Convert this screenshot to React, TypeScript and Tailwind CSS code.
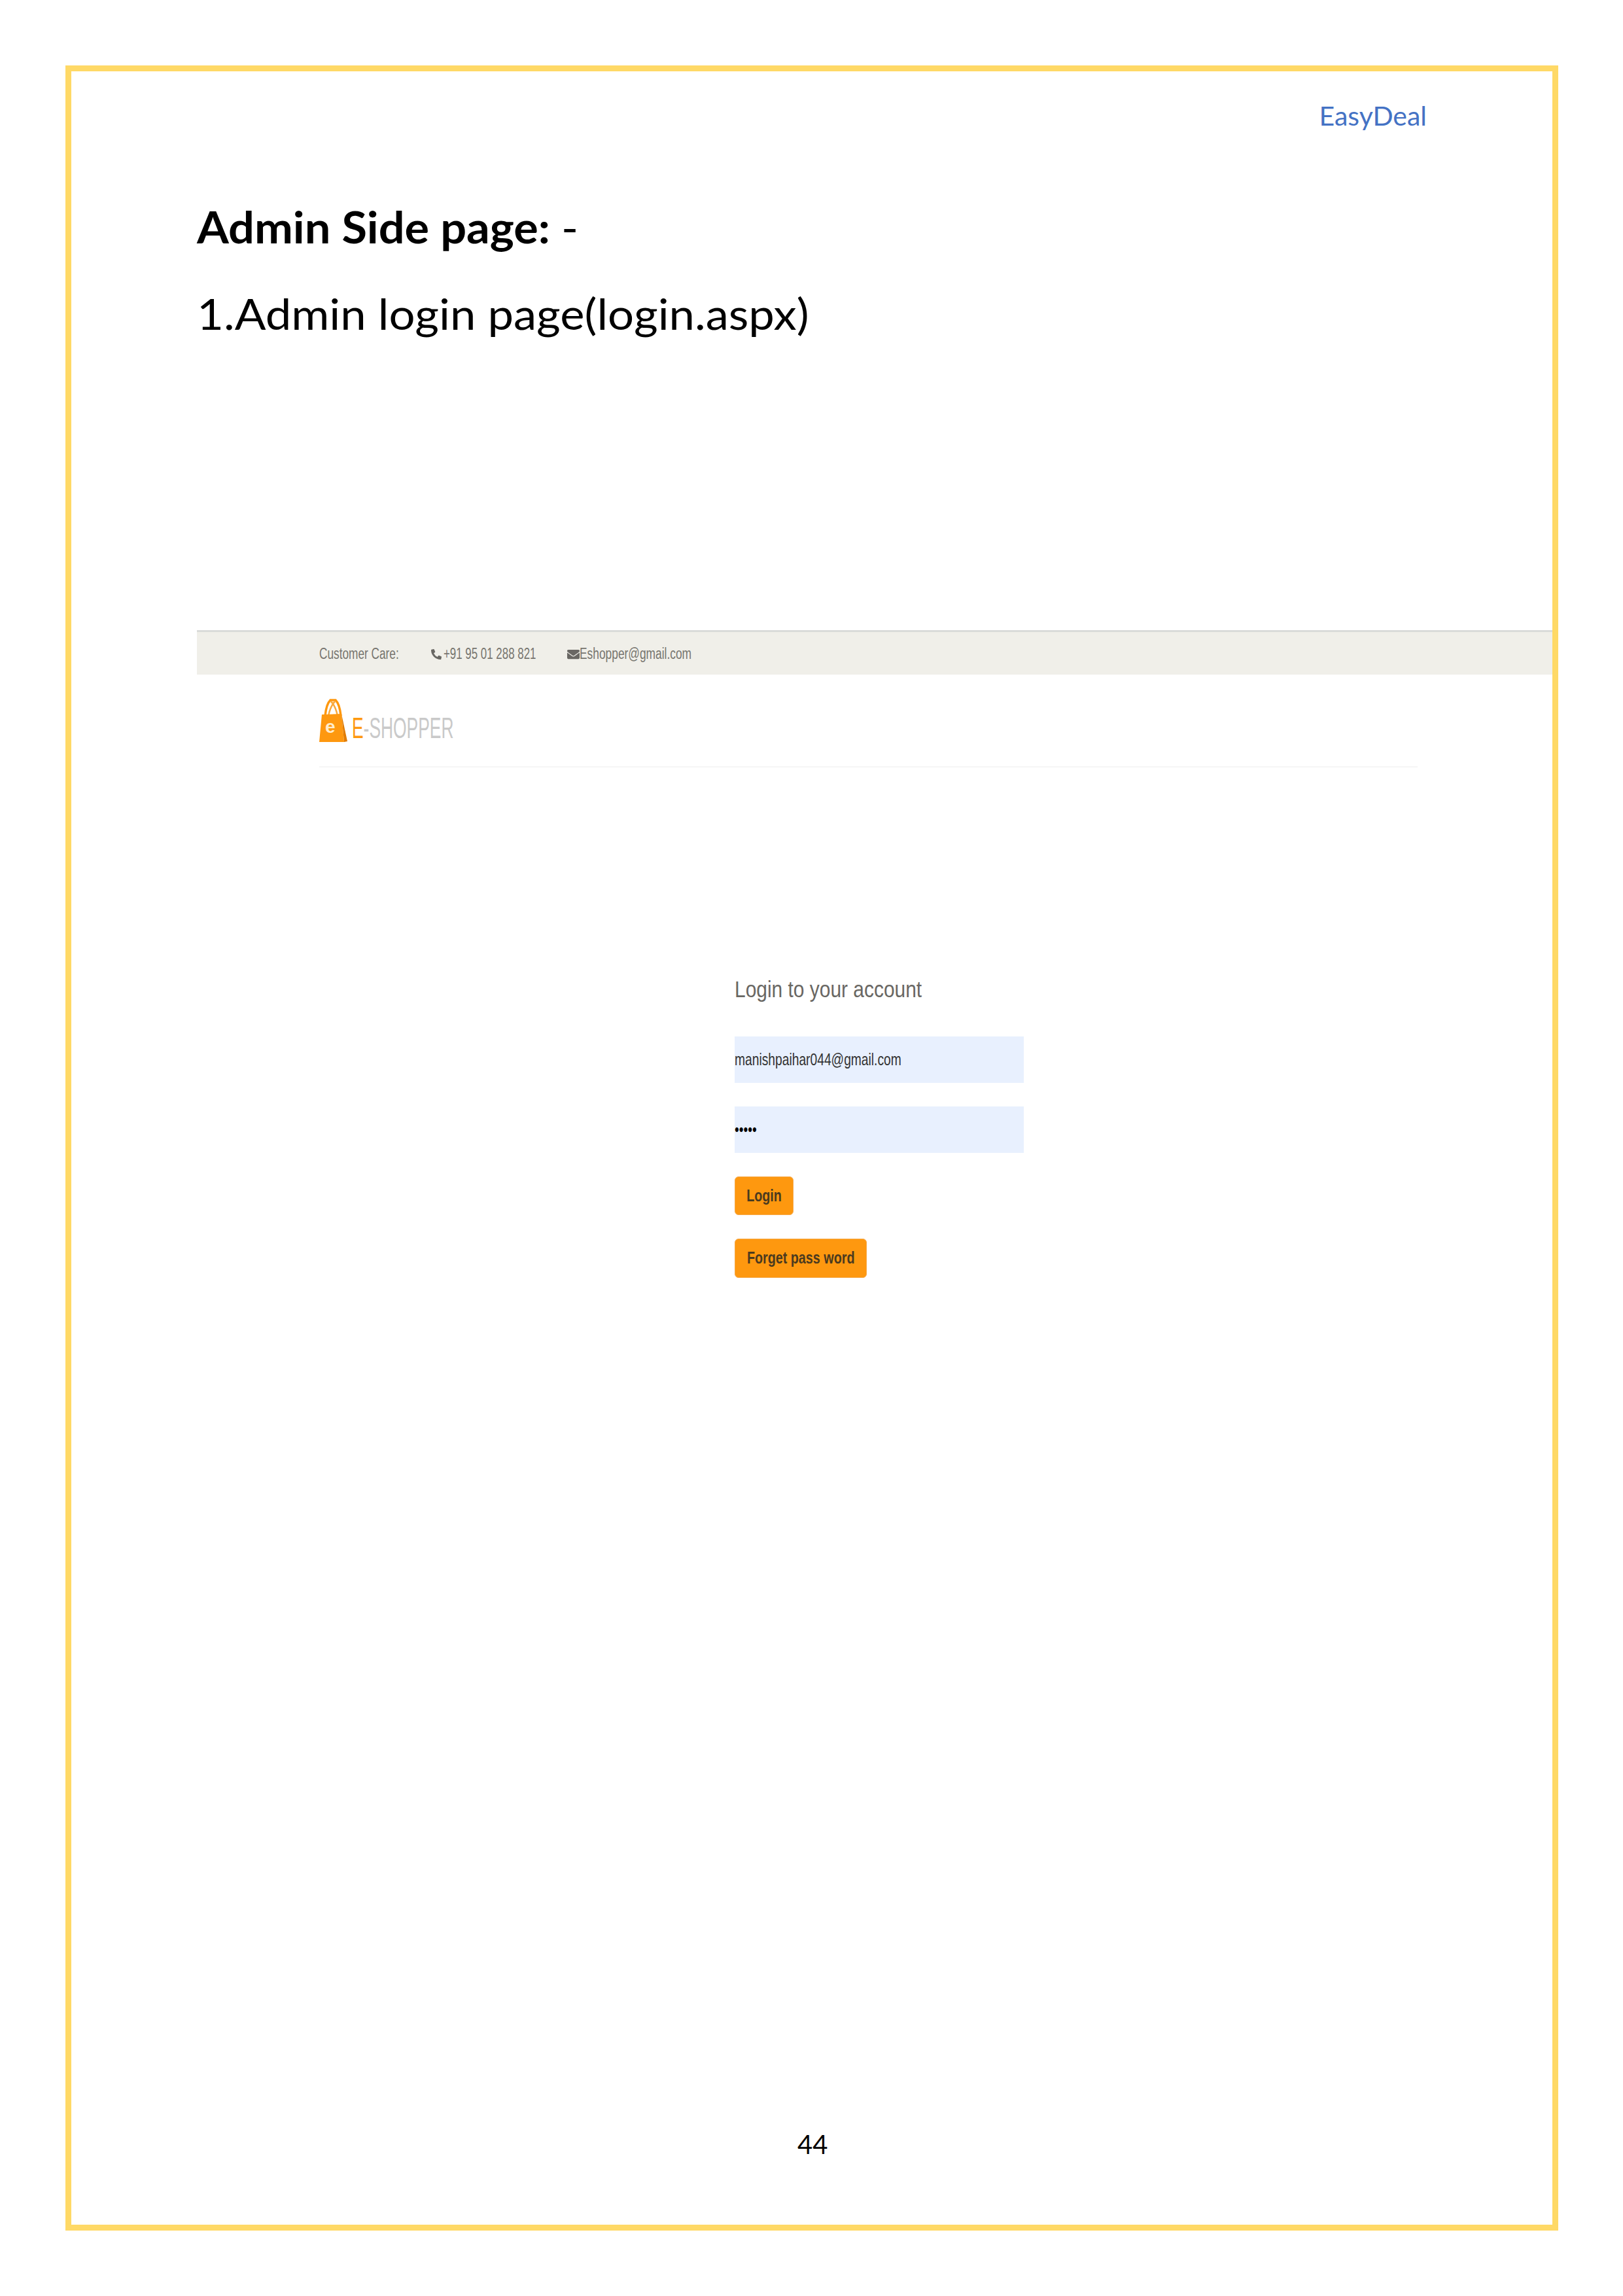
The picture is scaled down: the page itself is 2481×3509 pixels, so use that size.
import React from 'react';
import { FaPhoneAlt, FaEnvelope } from 'react-icons/fa';

const calibri = "font-['Lato','Carlito','Open_Sans',sans-serif]";
const arial = "font-['Liberation_Sans',Arial,sans-serif]";

const BagLogo = () => (
  <svg width="44" height="68" viewBox="0 0 44 68" className="shrink-0">
    <path d="M9 26 C10 16 13 6 17 2 L25 2 C29 6 32 16 33 26" fill="none" stroke="#fe980f" strokeWidth="3.5" />
    <path d="M14 26 C16 16 20 8 24 4 M28 26 C26 16 22 8 18 4" fill="none" stroke="#f9a93c" strokeWidth="2.5" />
    <path d="M4 24 L34 23 L38 66 L0 66 Z" fill="#fe980f" />
    <path d="M34 23 L43 65 L38 66 Z" fill="#e07c04" />
    <text x="9" y="52" fontSize="28" fontWeight="700" fill="#ffeccb" fontFamily="Liberation Sans">e</text>
  </svg>
);

const TopBar = () => (
  <div className={`flex h-[68px] items-center border-t-[3px] border-[#d9dbd9] bg-[#f0efe9] pl-[187px] pt-[2px] text-[#77756f] ${arial}`}>
    <span className="w-[171px] origin-left scale-x-[0.75] whitespace-nowrap text-[23px]">Customer Care:</span>
    <FaPhoneAlt className="h-[16px] w-[16px] text-[#696763]" />
    <span className="ml-[3px] w-[189px] origin-left scale-x-[0.735] whitespace-nowrap text-[23px]">+91 95 01 288 821</span>
    <FaEnvelope className="h-[20px] w-[19px] text-[#696763]" />
    <span className="origin-left scale-x-[0.755] whitespace-nowrap text-[23px]">Eshopper@gmail.com</span>
  </div>
);

const Logo = () => (
  <div className="ml-[187px] mr-[206px] flex h-[142px] items-start border-b-2 border-[#f5f5f5] pt-[37px]">
    <BagLogo />
    <span className={`ml-[6px] mt-[19px] origin-left scale-x-[0.6] whitespace-nowrap text-[44px] leading-[52px] font-light text-[#c9c9c9] ${arial}`}>
      <span className="text-[#fe980f]">E</span>-SHOPPER
    </span>
  </div>
);

const Field = ({ value, dots }: { value: string; dots?: boolean }) => (
  <div className={`flex h-[71px] w-[442px] items-center bg-[#e8f0fe] ${arial} ${dots ? 'text-black' : 'text-[#333]'}`}>
    <span className="origin-left scale-x-[0.74] whitespace-nowrap text-[26px]">{value}</span>
  </div>
);

const OrangeButton = ({ label, width, height }: { label: string; width: string; height: string }) => (
  <button className={`flex items-center justify-center rounded-[6px] border border-[#f5a94a] bg-[#fe980f] text-[#4a3a1f] ${width} ${height} ${arial}`}>
    <span className="scale-x-[0.79] whitespace-nowrap text-[25px] font-semibold">{label}</span>
  </button>
);

const LoginForm = () => (
  <div className="ml-[822px] mt-[319px] flex flex-col items-start">
    <h2 className={`origin-left scale-x-[0.855] whitespace-nowrap text-[35px] leading-[40px] font-normal text-[#696763] ${arial}`}>
      Login to your account
    </h2>
    <div className="mt-[52px]"><Field value="manishpaihar044@gmail.com" /></div>
    <div className="mt-[36px]"><Field value="•••••" dots /></div>
    <div className="mt-[36px]"><OrangeButton label="Login" width="w-[90px]" height="h-[59px]" /></div>
    <div className="mt-[36px]"><OrangeButton label="Forget pass word" width="w-[202px]" height="h-[60px]" /></div>
  </div>
);

export default function App() {
  return (
    <div className="h-[3509px] w-[2481px] bg-white pl-[100px] pt-[100px]">
      <div className="relative flex h-[3309px] w-[2282px] flex-col border-[9px] border-[#ffd966] pl-[192px]">
        <div className={`mt-[38px] mr-[192px] text-right text-[41px] leading-[60px] text-[#4472c4] ${calibri}`}>EasyDeal</div>
        <h1 className={`mt-[95px] origin-left scale-x-[1.065] text-[66px] leading-[90px] font-bold text-black ${calibri}`}>
          Admin Side page: <span className="font-normal">-</span>
        </h1>
        <p className={`mt-[42px] origin-left scale-x-[1.07] text-[66px] leading-[90px] text-black ${calibri}`}>1.Admin login page(login.aspx)</p>

        {/* screenshot pasted in the document */}
        <div className="mt-[439px]">
          <TopBar />
          <Logo />
          <LoginForm />
        </div>

        <div className={`absolute bottom-[98px] left-[1110px] text-[40px] leading-[50px] text-black ${calibri}`}>44</div>
      </div>
    </div>
  );
}
